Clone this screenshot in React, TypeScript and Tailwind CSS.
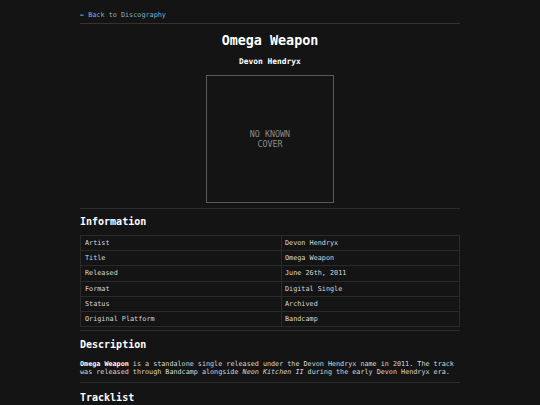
const mono = { fontFamily: '"DejaVu Sans Mono", "Liberation Mono", monospace' };

const info: [string, string][] = [
  ["Artist", "Devon Hendryx"],
  ["Title", "Omega Weapon"],
  ["Released", "June 26th, 2011"],
  ["Format", "Digital Single"],
  ["Status", "Archived"],
  ["Original Platform", "Bandcamp"],
];

export default function App() {
  return (
    <div className="min-h-screen bg-[#141414] text-[#d8d8d8]" style={mono}>
      <div className="mx-auto w-[380px] pt-[11px]">
        <header className="pb-[4px] border-b border-[#333333]">
          <a href="#" className="block text-[6.8px] leading-[8px] text-[#7fb2d2]">
            ← Back to Discography
          </a>
        </header>

        <section className="flex flex-col items-center pb-[5px] border-b border-[#2c2c2c]">
          <h1 className="mt-[9px] text-[13.4px] leading-[16px] font-bold text-white">Omega Weapon</h1>
          <div className="mt-[8px] text-[7.9px] leading-[10px] font-bold text-white">Devon Hendryx</div>
          <div className="mt-[8px] w-[128px] h-[128px] border border-[#5a5a5a] flex items-center justify-center">
            <div className="text-center text-[8.4px] leading-[10px] text-[#8a8a8a]">
              NO KNOWN
              <br />
              COVER
            </div>
          </div>
        </section>

        <section className="pt-[7px] pb-[3px] border-b border-[#2c2c2c]">
          <h2 className="text-[10px] leading-[12px] font-bold text-white">Information</h2>
          <table className="mt-[7px] w-full border-collapse text-[6.8px] leading-[8px]">
            <tbody>
              {info.map(([k, v]) => (
                <tr key={k} className="h-[15.2px]">
                  <td className="w-[201px] border border-[#2a2a2a] px-[4px] py-0">{k}</td>
                  <td className="border border-[#2a2a2a] px-[3px] py-0">{v}</td>
                </tr>
              ))}
            </tbody>
          </table>
        </section>

        <section className="pt-[8px] pb-[6px] border-b border-[#2c2c2c]">
          <h2 className="text-[10px] leading-[12px] font-bold text-white">Description</h2>
          <p className="mt-[9px] text-[6.75px] leading-[8px]">
            <strong className="font-bold text-white">Omega Weapon</strong> is a standalone single released under the Devon Hendryx name in 2011. The track was released through Bandcamp alongside <em>Neon Kitchen II</em> during the early Devon Hendryx era.
          </p>
        </section>

        <section className="pt-[9px]">
          <h2 className="text-[10px] leading-[12px] font-bold text-white">Tracklist</h2>
        </section>
      </div>
    </div>
  );
}
